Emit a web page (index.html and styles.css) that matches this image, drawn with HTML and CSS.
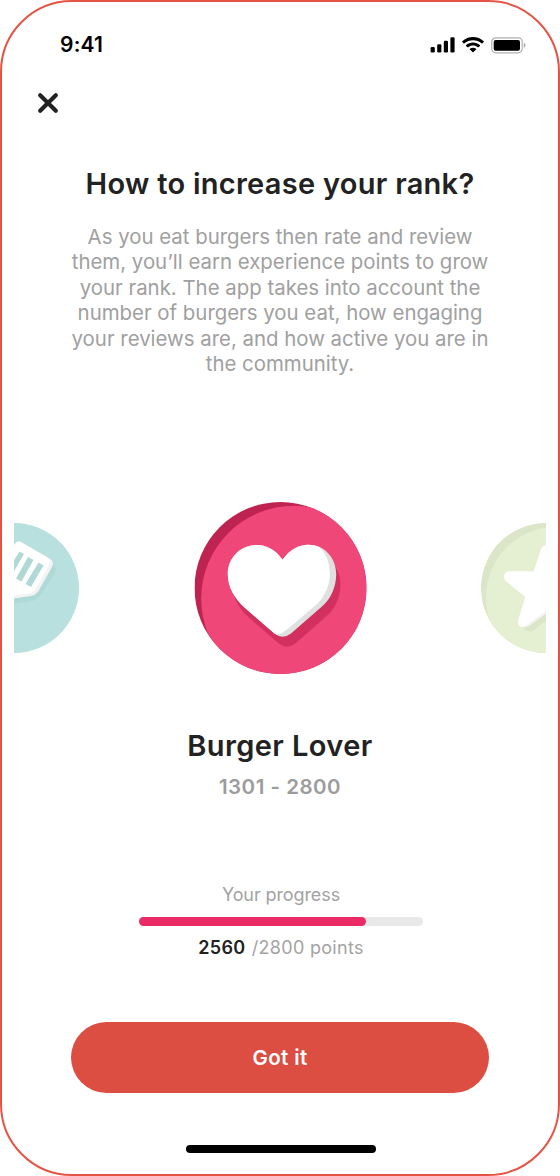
FILE: index.html
```html
<!DOCTYPE html>
<html lang="en">
<head>
    <meta charset="UTF-8">
    <meta name="viewport" content="width=device-width, initial-scale=1.0">
    <title>Burger Rank</title>

    <link rel="stylesheet" href="styles.css">
</head>
<body>

<div class="phone">
    <!--Status bar-->
    <div class="status-bar">
        <span class="time">9:41</span>
        <div class="status-icons">
            <svg width="25" height="16" viewBox="0 0 25 16">
                <rect x="0.6" y="10" width="4.2" height="5.6" rx="1.3"/>
                <rect x="7.2" y="7.2" width="4.2" height="8.4" rx="1.3"/>
                <rect x="13.8" y="3.8" width="4.2" height="11.8" rx="1.3"/>
                <rect x="20.4" y="0.3" width="4.2" height="15.3" rx="1.3"/>
            </svg>
            <svg width="22" height="16" viewBox="0 0 22 16">
                <path d="M11 0C6.9 0 3.1 1.6 .3 4.2Q-.1 4.7 .3 5.1L1.6 6.3Q2 6.7 2.5 6.3C4.8 4.3 7.7 3.2 11 3.2S17.2 4.3 19.5 6.3Q20 6.7 20.4 6.3L21.7 5.1Q22.1 4.7 21.7 4.2C18.9 1.6 15.1 0 11 0Z"/>
                <path d="M11 5.5C8.4 5.5 6 6.5 4.1 8.1Q3.7 8.5 4.1 8.9L5.4 10.2Q5.8 10.5 6.2 10.2C7.5 9.1 9.2 8.5 11 8.5S14.5 9.1 15.8 10.2Q16.2 10.5 16.6 10.2L17.9 8.9Q18.3 8.5 17.9 8.1C16 6.5 13.6 5.5 11 5.5Z"/>
                <path d="M11 10.7C9.8 10.7 8.7 11.1 7.9 11.8Q7.5 12.2 7.9 12.6L10.5 15.1Q11 15.6 11.5 15.1L14.1 12.6Q14.5 12.2 14.1 11.8C13.3 11.1 12.2 10.7 11 10.7Z"/>
            </svg>
            <svg width="35" height="17" viewBox="0 0 35 17">
                <rect x="0.8" y="0.8" width="30.4" height="15" rx="4" fill="none" stroke="#b0b0b0" stroke-width="1.2"/>
                <rect x="2.7" y="2.9" width="26.3" height="10.8" rx="2"/>
                <path d="M32.8 5.7v5.2c1-.5 1.7-1.5 1.7-2.6s-.7-2.1-1.7-2.6z" fill="#aaa"/>
            </svg>
        </div>
    </div>

    <!--Close button-->
    <button class="close" aria-label="Close">
        <svg width="22" height="22" viewBox="0 0 22 22">
            <path d="M3.2 3.2L18.8 18.8M18.8 3.2L3.2 18.8"/>
        </svg>
    </button>

    <h1>How to increase your rank?</h1>
    <p class="intro">
        As you eat burgers then rate and review<br>
        them, you’ll earn experience points to grow<br>
        your rank. The app takes into account the<br>
        number of burgers you eat, how engaging<br>
        your reviews are, and how active you are in<br>
        the community.
    </p>

    <!--Rank badges-->
    <div class="carousel">
        <svg class="badge" viewBox="0 0 130 130">
            <circle cx="65" cy="65" r="65" fill="#b7e0de"/>
            <path d="M74 25L104 41.5Q109 45 106 50L91 73Q88 77 83 78L66 80.5L52 96L38 70Z" fill="#afd9d7"/>
            <path d="M73 19.5L101.5 36Q105.5 39 103 44L89.5 68Q87 72 82 73L65 75.5L40 80L46 46L66 21Q69 17 73 19.5Z" fill="#f2f3f3"/>
            <path d="M72.5 19.5L99 35Q102.5 37.5 100 42L87 65.5Q85 69.5 80.5 70.5L65 72.5L40 78L46 46L66 21Q69 17 72.5 19.5Z" fill="#fff"/>
            <path d="M70.5 28.500L75 31L64 50L59 47ZM79 34L84.5 37L72.5 58.500L67 55.500ZM89.500 39.500L94.500 42.500L82 64L76.500 61Z" fill="#b0d9d5"/>
        </svg>
        <svg class="badge current" viewBox="-0.5 0 172 172">
            <clipPath id="coin"><circle cx="86" cy="86" r="86"/></clipPath>
            <g clip-path="url(#coin)">
                <rect width="172" height="172" fill="#be2351"/>
                <circle cx="99.7" cy="96.7" r="93" fill="#ef4878"/>
            </g>
            <path transform="translate(4.3 10)" d="M88 57.7C81 47.5 71.5 43 62 43C46 43 33.3 56 33.3 72C33.3 85 40 96.5 50 105.5L80 131.5Q88 138 96.5 131.5L128 104C136.5 96.5 141.7 85 141.7 72C141.7 56 130 42.7 114 42.7C104 42.7 95.5 47.5 88 57.7Z" fill="#d2305f"/>
            <path d="M88 57.7C81 47.5 71.5 43 62 43C46 43 33.3 56 33.3 72C33.3 85 40 96.5 50 105.5L80 131.5Q88 138 96.5 131.5L128 104C136.5 96.5 141.7 85 141.7 72C141.7 56 130 42.7 114 42.7C104 42.7 95.5 47.5 88 57.7Z" fill="#e0e0e0"/>
            <path d="M88 57.7C81 47.5 71.5 43 62 43C46 43 33.3 56 33.3 72C33.3 85 40 96.5 50 105.5L80 131.5Q81.5 132.8 84 132.3Q87.5 131.5 92 128L122 102.5C131 94 135.3 83 135.3 72C135.3 60 131.5 51 124.3 44.7Q119.5 42.7 114 42.7C104 42.7 95.5 47.5 88 57.7Z" fill="#fff"/>
        </svg>
        <svg class="badge" viewBox="0 0 130 130">
            <clipPath id="star-coin"><circle cx="65" cy="65" r="65"/></clipPath>
            <g clip-path="url(#star-coin)">
                <rect width="130" height="130" fill="#dbe6c8"/>
                <circle cx="75" cy="74" r="70" fill="#e5efd1"/>
            </g>
            <path d="M38 101L44 106.5Q49 110.5 53 107L70 94L74 80Z" fill="#dbe6c8"/>
            <path d="M40 103Q43.5 105.5 48 103L70 87L68 80Z" fill="#f3f3f3"/>
            <path d="M52.7 48.3H28.5C23 48.3 21 54.5 25.2 58.5L44.3 74L37 97.5C35.5 102.500 40 105.500 44.500 103L67.500 86L92 103Q99 105 99 99L91 74L112 58Q115 49 107 48.300H82L74.500 25Q68 17.500 60.200 25Z" fill="#fff"/>
        </svg>
    </div>

    <h2>Burger Lover</h2>
    <div class="range">1301 - 2800</div>

    <!--Progress-->
    <div class="progress">
        <div class="progress-label">Your progress</div>
        <div class="track"><div class="fill" style="width: 80%"></div></div>
        <div class="points"><strong>2560</strong> <span>/2800 points</span></div>
    </div>

    <button class="confirm">Got it</button>
    <div class="home-indicator"></div>
</div>

</body>
</html>
```
FILE: styles.css
```css
* {
    box-sizing: border-box;
}

body {
    margin: 0;
    background-color: #fff;
    font-family: Inter, Arial, sans-serif;
    color: #222;
}

button {
    border: none;
    padding: 0;
    background: none;
    font-family: inherit;
    cursor: pointer;
}

svg {
    display: block;
}

/* Phone frame */
.phone {
    width: 560px;
    height: 1176px;
    border: 2px solid #e55345;
    border-radius: 72px;
    overflow: hidden;
    display: flex;
    flex-direction: column;
    align-items: center;
}

/* Status bar */
.status-bar {
    width: 100%;
    height: 24px;
    margin-top: 31px;
    padding: 0 32px 0 58px;
    display: flex;
    justify-content: space-between;
    align-items: center;
}

.time {
    font-size: 21px;
    font-weight: 600;
    line-height: 24px;
    letter-spacing: 0.2px;
    color: #000;
}

.status-icons {
    display: flex;
    align-items: center;
    gap: 7px;
}

.close {
    align-self: flex-start;
    margin: 35px 0 0 35px;
}

.close path {
    stroke: #222;
    stroke-width: 4.2;
    stroke-linecap: round;
}

/* Headings */
h1, h2 {
    margin: 0;
    font-size: 29px;
    font-weight: 600;
    line-height: 36px;
    white-space: nowrap;
}

h1 {
    margin-top: 52px;
    letter-spacing: 0.28px;
}

.intro {
    margin: 21.5px 0 0;
    font-size: 20.4px;
    line-height: 25.5px;
    color: #a0a0a0;
    text-align: center;
    white-space: nowrap;
}

/* Badges, the outer two are cut off by the edges */
.carousel {
    width: 532px;
    height: 172px;
    margin-top: 125.5px;
    display: flex;
    justify-content: space-between;
    align-items: center;
    overflow: hidden;
}

.badge {
    width: 130px;
    height: 130px;
    margin: 0 -65px;
    flex-shrink: 0;
}

.badge.current {
    width: 172px;
    height: 172px;
    margin: 0;
    overflow: visible;
}

h2 {
    margin-top: 54px;
    letter-spacing: 0.4px;
}

.range {
    margin-top: 10px;
    font-size: 20.5px;
    font-weight: 600;
    line-height: 26px;
    letter-spacing: 0.5px;
    color: #9c9c9c;
}

/* Progress */
.progress {
    width: 284px;
    margin: 84px 0 0 2px;
    text-align: center;
    color: #a3a3a3;
    font-size: 18px;
    line-height: 22px;
}

.progress-label {
    letter-spacing: -0.1px;
}

.track {
    height: 9px;
    margin: 11px 0;
    border-radius: 5px;
    background-color: #e9e9e9;
}

.fill {
    height: 100%;
    border-radius: 5px;
    background-color: #ea2b66;
}

.points {
    letter-spacing: 0.3px;
}

.points strong {
    margin-right: 1px;
    color: #222;
    font-weight: 600;
}

.confirm {
    width: 418px;
    height: 71px;
    margin-top: 63px;
    border-radius: 36px;
    background-color: #dc4e41;
    color: #fff;
    font-size: 20.5px;
    font-weight: 600;
    letter-spacing: 0.4px;
}

.home-indicator {
    width: 190px;
    height: 8px;
    margin: 52px 0 0 2px;
    border-radius: 4px;
    background-color: #000;
}
```
